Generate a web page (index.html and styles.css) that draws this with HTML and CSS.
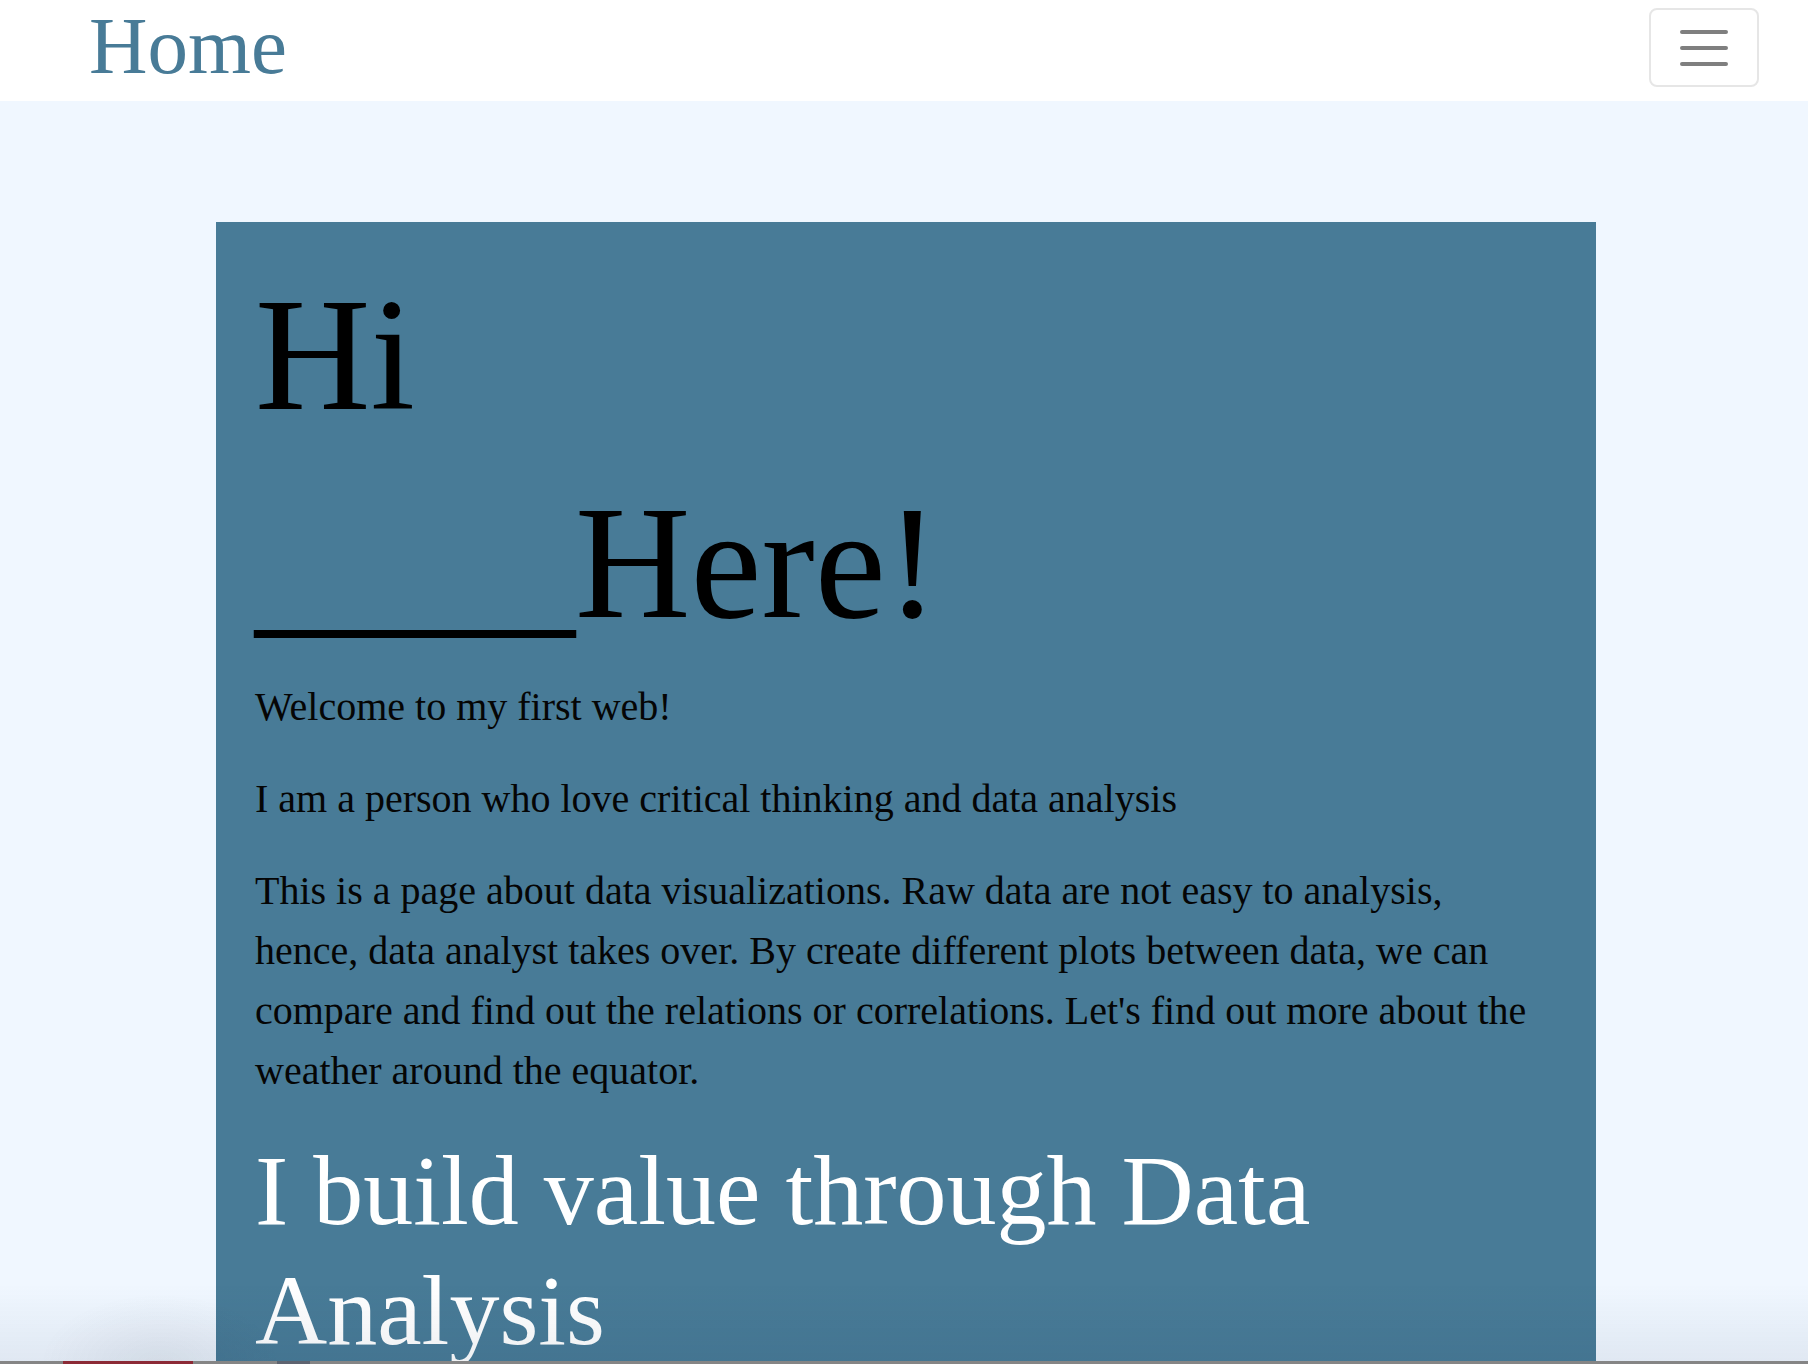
FILE: index.html
```html
<!DOCTYPE html>
<html lang="en">
<head>
<meta charset="utf-8">
<title>Home</title>
<link rel="stylesheet" href="styles.css">
</head>
<body>
  <nav class="navbar">
    <a class="brand" href="#">Home</a>
    <button class="toggler" type="button" aria-label="Toggle navigation">
      <svg class="toggler-icon" width="60" height="60" viewBox="0 0 60 60" aria-hidden="true">
        <path d="M8 14h44M8 30h44M8 46h44" stroke="rgba(0,0,0,0.5)" stroke-width="4" stroke-linecap="round" fill="none"/>
      </svg>
    </button>
  </nav>

  <main class="page">
    <section class="card">
      <h1 class="hero-title">Hi<br>____Here!</h1>
      <p class="text">Welcome to my first web!</p>
      <p class="text">I am a person who love critical thinking and data analysis</p>
      <p class="text">This is a page about data visualizations. Raw data are not easy to analysis, hence, data analyst takes over. By create different plots between data, we can compare and find out the relations or correlations. Let's find out more about the weather around the equator.</p>
      <h2 class="value">I build value through Data Analysis</h2>
    </section>
  </main>

  <div class="screen-edge">
    <span class="edge-red"></span>
    <span class="edge-dark"></span>
  </div>
</body>
</html>
```

FILE: styles.css
```css
html, body {
  margin: 0;
  padding: 0;
}

body {
  background: #f0f7ff;
  font-family: "Liberation Serif", "Times New Roman", serif;
  overflow: hidden;
}

.navbar {
  display: flex;
  justify-content: space-between;
  align-items: flex-start;
  height: 101px;
  box-sizing: border-box;
  padding: 0 49px 0 89px;
  background: #ffffff;
}

.brand {
  font-size: 81px;
  line-height: 88px;
  margin-top: 2px;
  color: #487b97;
  text-decoration: none;
}

.toggler {
  margin-top: 8px;
  width: 110px;
  height: 79px;
  box-sizing: border-box;
  border: 2px solid #e6e6e6;
  border-radius: 8px;
  background: #ffffff;
  padding: 0;
  display: flex;
  align-items: center;
  justify-content: center;
}

.toggler-icon {
  display: block;
}

.page {
  padding-top: 121px;
}

.card {
  width: 1380px;
  margin-left: 216px;
  box-sizing: border-box;
  padding: 29px 60px 60px 39px;
  background: #487b97;
}

.hero-title {
  margin: 0 0 10px;
  font-size: 160px;
  line-height: 208px;
  font-weight: normal;
  color: #000000;
}

.text {
  margin: 0 0 32px;
  font-size: 40px;
  line-height: 60px;
  color: #050505;
}

.value {
  margin: -2px 0 0;
  font-size: 100px;
  line-height: 120px;
  font-weight: normal;
  color: #ffffff;
}

.screen-edge {
  position: fixed;
  left: 0;
  right: 0;
  bottom: 0;
  height: 80px;
  pointer-events: none;
  background:
    radial-gradient(ellipse 120px 70px at 160px 100%, rgba(30, 40, 60, 0.07), rgba(30, 40, 60, 0) 100%),
    linear-gradient(to bottom, rgba(20, 45, 80, 0) 0%, rgba(20, 45, 80, 0.075) 100%);
}

.screen-edge::after {
  content: "";
  position: absolute;
  left: 0;
  right: 0;
  bottom: 0;
  height: 3px;
  background: #858585;
}

.edge-red {
  position: absolute;
  left: 63px;
  width: 130px;
  bottom: 0;
  height: 3px;
  background: #8c2a36;
  z-index: 1;
}

.edge-dark {
  position: absolute;
  left: 277px;
  width: 33px;
  bottom: 0;
  height: 3px;
  background: #5e6470;
  z-index: 1;
}
```
